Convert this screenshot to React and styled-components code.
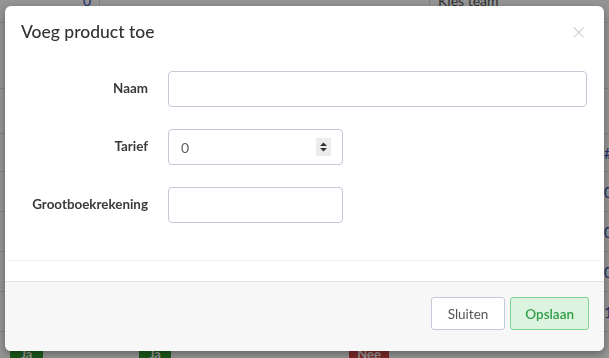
import React from 'react';
import styled, { createGlobalStyle } from 'styled-components';

const GlobalStyle = createGlobalStyle`
  html, body {
    margin: 0;
    padding: 0;
    background: #ffffff;
    font-family: Lato, "Open Sans", "Liberation Sans", sans-serif;
  }
  * { box-sizing: border-box; }
`;

/* ---------- page behind the backdrop ---------- */

const BackPage = styled.div`
  width: 609px;
  height: 358px;
  overflow: hidden;
  font-size: 14px;
  color: #333;
`;

const TopBar = styled.div`
  display: grid;
  grid-template-columns: 100px 330px 1fr;
  height: 23px;
  border-bottom: 1px solid #ddd;
`;

const TopCell = styled.div`
  border-right: ${(p) => (p.$line ? '1px solid #ddd' : 'none')};
  padding: 0 8px;
  line-height: 14px;
  margin-top: -6px;
  color: ${(p) => p.$color || '#555'};
  text-align: ${(p) => p.$align || 'left'};
`;

const BackRow = styled.div`
  height: ${(p) => p.$h}px;
  border-bottom: 1px solid #ddd;
  display: flex;
  align-items: center;
  justify-content: flex-end;
`;

const BackNum = styled.span`
  color: #2a55b5;
  font-size: 15px;
  width: 5px;
  overflow: hidden;
`;

const BadgeRow = styled.div`
  display: grid;
  grid-template-columns: 10px 33px 96px 32px 178px 40px 1fr;
  padding-top: 12px;
`;

const Badge = styled.span`
  grid-column: ${(p) => p.$col};
  background: ${(p) => p.$bg};
  color: #fff;
  font-size: 13px;
  font-weight: 700;
  text-align: center;
  height: 20px;
  line-height: 20px;
`;

/* ---------- modal ---------- */

const Backdrop = styled.div`
  position: fixed;
  inset: 0;
  background: rgba(0, 0, 0, 0.42);
  padding: 6px 5px 7px 5px;
  display: flex;
`;

const Modal = styled.div`
  flex: 1;
  background: #fff;
  border-radius: 6px;
  box-shadow: 0 3px 9px rgba(0, 0, 0, 0.35);
  display: flex;
  flex-direction: column;
  overflow: hidden;
`;

const Header = styled.div`
  display: flex;
  align-items: flex-start;
  justify-content: space-between;
  height: 37px;
  padding: 14px 18px 0 16px;
`;

const Title = styled.h4`
  margin: 0;
  font-size: 17.5px;
  font-weight: 500;
  line-height: 23px;
  color: #333;
`;

const Close = styled.span`
  font-size: 25px;
  line-height: 21px;
  font-weight: 300;
  color: #c9c9c9;
  margin-top: 1px;
`;

const Body = styled.div`
  padding: 0 2px 20px;
`;

const Box = styled.div`
  border-bottom: 1px solid #eeeeee;
  border-radius: 0 0 4px 4px;
  padding: 28px 0 37px;
`;

const Form = styled.div`
  display: grid;
  grid-template-columns: 141px 1fr;
  column-gap: 20px;
  row-gap: 22px;
  padding-right: 15px;
  align-items: center;
`;

const Label = styled.label`
  text-align: right;
  font-size: 13.4px;
  font-weight: 700;
  color: #3a3a3a;
  margin-top: -2px;
`;

const Field = styled.div`
  position: relative;
  width: ${(p) => p.$w || '100%'};
`;

const Input = styled.input`
  display: block;
  width: 100%;
  height: 36px;
  border: 1px solid #c3cad5;
  border-radius: 4px;
  padding: 0 12px;
  font-family: inherit;
  font-size: 14px;
  color: #5a5f66;
  background: #fff;
  outline: none;
`;

const Spinner = styled.div`
  position: absolute;
  right: 12px;
  top: 9px;
  width: 15px;
  height: 18px;
  background: #ececec;
  display: flex;
  align-items: center;
  justify-content: center;
`;

const Footer = styled.div`
  flex: 1;
  border-top: 1px solid #e3e3e3;
  background: #f7f7f7;
  display: flex;
  justify-content: flex-end;
  align-items: flex-start;
  gap: 5px;
  padding: 15px 15px;
`;

const Button = styled.button`
  height: 33px;
  padding: 0 ${(p) => (p.$primary ? 14 : 16)}px;
  border-radius: 3px;
  font-family: inherit;
  font-size: 13.5px;
  cursor: pointer;
  border: 1px solid ${(p) => (p.$primary ? '#7fd390' : '#c3cad8')};
  background: ${(p) => (p.$primary ? '#dcf3e0' : '#fff')};
  color: ${(p) => (p.$primary ? '#2e9c45' : '#555')};
  font-weight: ${(p) => (p.$primary ? 600 : 400)};
`;

const SpinIcon = () => (
  <svg width="9" height="12" viewBox="0 0 9 12">
    <path d="M1 5 L4.5 1.5 L8 5 Z" fill="#333" />
    <path d="M1 7 L4.5 10.5 L8 7 Z" fill="#333" />
  </svg>
);

export default function App() {
  return (
    <>
      <GlobalStyle />
      <BackPage>
        <TopBar>
          <TopCell $line $align="right" $color="#2a55b5">0</TopCell>
          <TopCell $line />
          <TopCell>Kies team</TopCell>
        </TopBar>
        <BackRow $h={66} />
        <BackRow $h={45} />
        <BackRow $h={38}><BackNum>#</BackNum></BackRow>
        <BackRow $h={40}><BackNum>0</BackNum></BackRow>
        <BackRow $h={40}><BackNum>0</BackNum></BackRow>
        <BackRow $h={40}><BackNum>0</BackNum></BackRow>
        <BackRow $h={40}><BackNum>1</BackNum></BackRow>
        <BadgeRow>
          <Badge $col={2} $bg="#2f9a2f">Ja</Badge>
          <Badge $col={4} $bg="#2f9a2f">Ja</Badge>
          <Badge $col={6} $bg="#d94848">Nee</Badge>
        </BadgeRow>
      </BackPage>

      <Backdrop>
        <Modal>
          <Header>
            <Title>Voeg product toe</Title>
            <Close>×</Close>
          </Header>
          <Body>
            <Box>
              <Form>
                <Label>Naam</Label>
                <Field>
                  <Input type="text" defaultValue="" />
                </Field>
                <Label>Tarief</Label>
                <Field $w="175px">
                  <Input type="text" defaultValue="0" />
                  <Spinner><SpinIcon /></Spinner>
                </Field>
                <Label>Grootboekrekening</Label>
                <Field $w="175px">
                  <Input type="text" defaultValue="" />
                </Field>
              </Form>
            </Box>
          </Body>
          <Footer>
            <Button>Sluiten</Button>
            <Button $primary>Opslaan</Button>
          </Footer>
        </Modal>
      </Backdrop>
    </>
  );
}
